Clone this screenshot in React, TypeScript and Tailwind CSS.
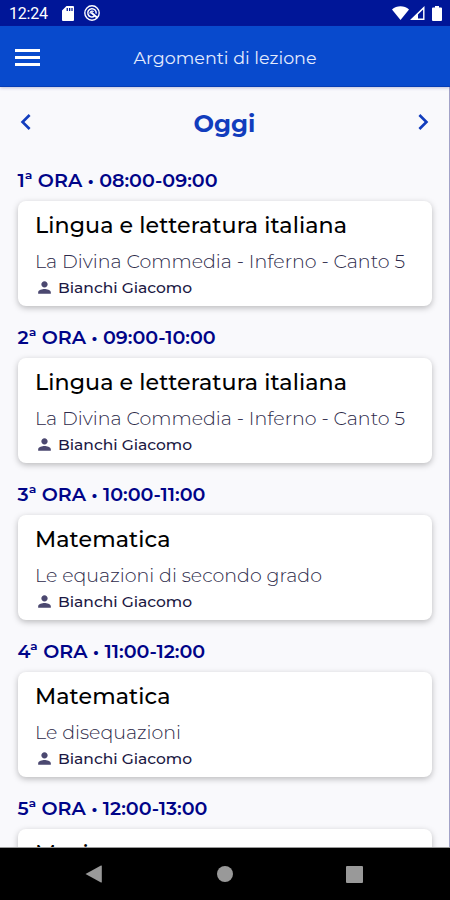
import { MdPerson, MdChevronLeft, MdChevronRight } from 'react-icons/md';

interface Lesson {
    hour: string;
    time: string;
    subject: string;
    topic?: string;
    teacher?: string;
}

const LESSONS: Lesson[] = [
    {
        hour: '1',
        time: '08:00-09:00',
        subject: 'Lingua e letteratura italiana',
        topic: 'La Divina Commedia - Inferno - Canto 5',
        teacher: 'Bianchi Giacomo',
    },
    {
        hour: '2',
        time: '09:00-10:00',
        subject: 'Lingua e letteratura italiana',
        topic: 'La Divina Commedia - Inferno - Canto 5',
        teacher: 'Bianchi Giacomo',
    },
    {
        hour: '3',
        time: '10:00-11:00',
        subject: 'Matematica',
        topic: 'Le equazioni di secondo grado',
        teacher: 'Bianchi Giacomo',
    },
    {
        hour: '4',
        time: '11:00-12:00',
        subject: 'Matematica',
        topic: 'Le disequazioni',
        teacher: 'Bianchi Giacomo',
    },
    {
        hour: '5',
        time: '12:00-13:00',
        subject: 'Musica',
    },
];

function StatusBar() {
    return (
        <div className="shrink-0 h-[26px] bg-[#001698] flex items-center justify-between pl-[9px] pr-[8px] text-white">
            <div className="flex items-center">
                <span className="w-[53px] pt-[2px] font-['Roboto',sans-serif] text-[16px] leading-none tracking-[-0.2px] whitespace-nowrap">12:24</span>
                <svg viewBox="0 0 12 15" className="w-3 h-[15px]" fill="currentColor">
                    <path fillRule="evenodd" d="M4.5 0H11q1 0 1 1v13q0 1-1 1H1q-1 0-1-1V4.5ZM4.6 2v3h1.3V2Zm2.4 0v3h1.3V2Zm2.4 0v3h1.2V2Z" />
                </svg>
                <svg viewBox="0 0 16 16" className="w-4 h-4 ml-[10px]" fill="none" stroke="currentColor">
                    <circle cx="8" cy="8" r="7.2" strokeWidth="1.4" />
                    <path d="M10.5 11.2A4.2 4.2 0 1 1 12.1 8.6" strokeWidth="1.5" />
                    <path d="M7.2 7.4 13 12.6" strokeWidth="2" />
                    <path d="M6 8.6A2.2 2.2 0 0 1 9.6 6.6" strokeWidth="1.2" />
                </svg>
            </div>
            <div className="flex items-center">
                <svg viewBox="0 0 17 14" className="w-[17px] h-[14px]" fill="currentColor">
                    <path d="M0 3.4C4.7-.9 12.3-.9 17 3.4L8.5 14Z" />
                </svg>
                <svg viewBox="0 0 15 14" className="w-[15px] h-[14px] ml-px" fill="currentColor">
                    <path fillRule="evenodd" d="M0 14 14.5 0v14ZM8 12.6h5.1V3.5L8 8.4Z" />
                </svg>
                <svg viewBox="0 0 10 15" className="w-[10px] h-[15px] ml-[7px]" fill="currentColor">
                    <path d="M3 0h4v1.5h2q1 0 1 1V14q0 1-1 1H1q-1 0-1-1V2.5q0-1 1-1h2Z" />
                </svg>
            </div>
        </div>
    );
}

function AppBar() {
    return (
        <header className="relative z-10 shrink-0 h-[61px] bg-[#084acd] border-b border-[#063db5] shadow-[0_1px_3px_rgba(60,60,140,0.3)] flex items-center px-[15px]">
            <button aria-label="Menu" className="w-[25px] pt-[2px] flex flex-col gap-[4px]">
                <span className="h-[3px] bg-white" />
                <span className="h-[3px] bg-white" />
                <span className="h-[3px] bg-white" />
            </button>
            <h1 className="flex-1 mr-[25px] pt-[3px] text-center text-[17.5px] leading-6 font-normal text-[#e4ebfd]">
                Argomenti di lezione
            </h1>
        </header>
    );
}

function LessonItem({ lesson }: { lesson: Lesson }) {
    return (
        <section className="h-[157px] shrink-0">
            <h3 className="h-[33px] pt-px text-[19.1px] leading-[24px] font-semibold text-[#000488] whitespace-nowrap">
                {lesson.hour}ª ORA • {lesson.time}
            </h3>
            <div className="h-[105px] rounded-lg bg-white px-[17.5px] pt-[10px] shadow-[0_2px_6px_rgba(0,0,0,0.26)] whitespace-nowrap">
                <h4 className="h-[36px] text-[22.2px] leading-[30px] font-medium tracking-[0.08px] text-black">{lesson.subject}</h4>
                <p className="h-[27px] text-[19px] leading-[30px] font-light text-[#2d2a4a]">{lesson.topic}</p>
                {lesson.teacher && (
                    <div className="flex items-center h-[28px]">
                        <MdPerson className="w-[19px] h-[19px] mb-[2px] text-[#4b4870]" />
                        <span className="ml-[4px] text-[15.5px] leading-none font-medium text-[#1b1843]">{lesson.teacher}</span>
                    </div>
                )}
            </div>
        </section>
    );
}

function NavBar() {
    return (
        <nav className="shrink-0 h-[53px] bg-black border-t border-[#999] flex items-center justify-between pl-[85px] pr-[87px]">
            <svg viewBox="0 0 18 18" className="w-[18px] h-[18px]" fill="#999">
                <path d="M.5 9 16 .5q.8-.4.8.5v16q0 .9-.8.5Z" />
            </svg>
            <span className="w-4 h-4 rounded-full bg-[#999]" />
            <span className="w-[17px] h-[17px] rounded-[1px] bg-[#999]" />
        </nav>
    );
}

export default function App() {
    return (
        <div className="w-[450px] h-[900px] overflow-hidden flex flex-col bg-[#f9f9fc] font-['Montserrat','Inter',sans-serif]">
            <StatusBar />
            <AppBar />
            <main className="flex-1 min-h-0 overflow-hidden flex flex-col border-r border-[#a3a3c8]">
                <div className="shrink-0 h-[81px] flex items-start justify-between px-[10px] pt-[19px] text-[#123dbd]">
                    <MdChevronLeft className="w-[32px] h-[32px]" />
                    <h2 className="pt-[2px] text-[24.3px] leading-[30px] font-bold">Oggi</h2>
                    <MdChevronRight className="w-[32px] h-[32px]" />
                </div>
                <div className="flex flex-col px-[17.5px]">
                    {LESSONS.map((lesson) => (
                        <LessonItem key={lesson.hour} lesson={lesson} />
                    ))}
                </div>
            </main>
            <NavBar />
        </div>
    );
}
